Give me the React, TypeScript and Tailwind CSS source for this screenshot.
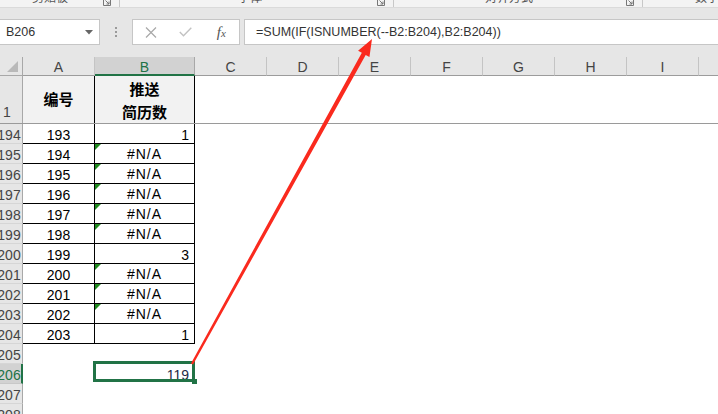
import React from "react";

const UI = "font-['Liberation_Sans','Noto_Sans_CJK_SC',sans-serif]";
const CJK = "font-['Noto_Sans_CJK_SC','Liberation_Sans',sans-serif]";

const cols = [
  { k: "A", w: "w-[72px]" },
  { k: "B", w: "w-[100px]" },
  { k: "C", w: "w-[72px]" },
  { k: "D", w: "w-[72px]" },
  { k: "E", w: "w-[72px]" },
  { k: "F", w: "w-[72px]" },
  { k: "G", w: "w-[72px]" },
  { k: "H", w: "w-[72px]" },
  { k: "I", w: "w-[72px]" },
  { k: "J", w: "w-[72px]" },
];

type Row = { n: number; a?: string; b?: string };

const rows: Row[] = [
  { n: 194, a: "193", b: "1" },
  { n: 195, a: "194", b: "#N/A" },
  { n: 196, a: "195", b: "#N/A" },
  { n: 197, a: "196", b: "#N/A" },
  { n: 198, a: "197", b: "#N/A" },
  { n: 199, a: "198", b: "#N/A" },
  { n: 200, a: "199", b: "3" },
  { n: 201, a: "200", b: "#N/A" },
  { n: 202, a: "201", b: "#N/A" },
  { n: 203, a: "202", b: "#N/A" },
  { n: 204, a: "203", b: "1" },
  { n: 205 },
  { n: 206 },
  { n: 207 },
  { n: 208 },
];

function Launcher() {
  return (
    <svg width="8" height="8" viewBox="0 0 8 8" className="block">
      <path d="M0.5 0.5 H7.5 V7.5 H0.5 Z" fill="none" stroke="#777" strokeWidth="1" />
      <path d="M2.5 2.5 L6 6 M6 3.5 V6 H3.5" fill="none" stroke="#777" strokeWidth="1" />
    </svg>
  );
}

function RibbonGroup({ label, w, ml, last }: { label: string; w: string; ml: string; last?: boolean }) {
  return (
    <div className={`${w} h-full shrink-0 flex items-start ${last ? "" : "border-r border-[#c8c8c8]"}`}>
      <span className={`${ml} -mt-[8px] text-[12px] leading-[12px] text-[#555] whitespace-nowrap`}>{label}</span>
      {!last && (
        <div className="ml-auto mr-[8px] -mt-[2px]">
          <Launcher />
        </div>
      )}
    </div>
  );
}

function RowNum({ n, sel }: { n: number; sel?: boolean }) {
  return (
    <div
      className={`w-[23px] shrink-0 h-full overflow-hidden flex items-center border-b ${
        sel
          ? "bg-[#d2d2d2] text-[#217346] border-r-2 border-r-[#217346] border-b-[#c8c8c8]"
          : "bg-[#e6e6e6] text-[#444] border-r border-r-[#a8a8a8] border-b-[#d6d6d6]"
      }`}
    >
      <div className="w-[34px] -ml-[8px] shrink-0 text-center text-[14px] leading-none pt-[2px]">{n}</div>
    </div>
  );
}

export default function App() {
  return (
    <div className={`relative w-[718px] h-[414px] overflow-hidden bg-white ${UI}`}>
      {/* ribbon edge */}
      <div className="h-[8px] bg-[#f3f3f3] border-b border-[#dadada] flex overflow-hidden">
        <RibbonGroup label="剪贴板" w="w-[120px]" ml="ml-[32px]" />
        <RibbonGroup label="字体" w="w-[274px]" ml="ml-[118px]" />
        <RibbonGroup label="对齐方式" w="w-[249px]" ml="ml-[91px]" />
        <RibbonGroup label="数字" w="w-[80px]" ml="ml-[52px]" last />
      </div>

      {/* formula bar */}
      <div className="h-[49px] bg-[#e6e6e6] pt-[11px] flex items-start">
        <div className="w-[100px] h-[26px] shrink-0 bg-white border border-l-0 border-[#c6c6c6] flex items-center pl-[6px] text-[12.5px] text-[#333]">
          B206
          <svg width="8" height="5" viewBox="0 0 8 5" className="ml-auto mr-[6px]">
            <path d="M0 0 H8 L4 4.5 Z" fill="#666" />
          </svg>
        </div>
        <div className="w-[32px] h-[26px] shrink-0 flex flex-col items-center justify-center gap-[2px]">
          <span className="w-[2px] h-[2px] bg-[#9a9a9a]" />
          <span className="w-[2px] h-[2px] bg-[#9a9a9a]" />
          <span className="w-[2px] h-[2px] bg-[#9a9a9a]" />
        </div>
        <div className="w-[108px] h-[26px] shrink-0 bg-white border border-[#c6c6c6] flex items-center">
          <div className="w-[36px] flex justify-center">
            <svg width="12" height="11" viewBox="0 0 12 11">
              <path d="M1 0.5 L11 10.5 M11 0.5 L1 10.5" stroke="#a8a8a8" strokeWidth="1.2" />
            </svg>
          </div>
          <div className="w-[36px] flex justify-center">
            <svg width="13" height="10" viewBox="0 0 13 10">
              <path d="M0.8 5 L4.5 8.8 L12.3 0.8" fill="none" stroke="#c2c2c2" strokeWidth="1.4" />
            </svg>
          </div>
          <div className="w-[36px] flex justify-center">
            <span className="font-['Liberation_Serif',serif] italic text-[15px] leading-none text-[#555]">
              f<span className="text-[11px]">x</span>
            </span>
          </div>
        </div>
        <div className="ml-[4px] flex-1 h-[26px] bg-white border border-r-0 border-[#c6c6c6] flex items-center pl-[11px] text-[12.5px] text-[#333] whitespace-nowrap">
          =SUM(IF(ISNUMBER(--B2:B204),B2:B204))
        </div>
      </div>

      {/* column headers */}
      <div className="flex h-[19px] bg-[#e6e6e6]">
        <div className="w-[23px] shrink-0 border-r border-b border-[#a8a8a8] flex items-end justify-end pr-[4px] pb-[3px]">
          <svg width="11" height="11" viewBox="0 0 11 11">
            <path d="M11 0 V11 H0 Z" fill="#b9b9b9" />
          </svg>
        </div>
        {cols.map((c) => (
          <div
            key={c.k}
            className={`${c.w} shrink-0 flex items-center justify-center text-[14px] leading-none pt-[2px] ${
              c.k === "B"
                ? "bg-[#d2d2d2] text-[#217346] border-r border-r-[#a8a8a8] border-b-2 border-b-[#217346]"
                : "text-[#444] border-r border-r-[#c4c4c4] border-b border-b-[#9c9c9c]"
            }`}
          >
            {c.k}
          </div>
        ))}
      </div>

      {/* row 1 (frozen) */}
      <div className="flex h-[48px] border-b border-[#9a9a9a]">
        <div className="w-[23px] shrink-0 h-full overflow-hidden flex items-end bg-[#e6e6e6] text-[#444] border-r border-[#a8a8a8]">
          <div className="w-[30px] -ml-[8px] shrink-0 text-center text-[14px] leading-none pb-[4px]">1</div>
        </div>
        <div className={`w-[72px] shrink-0 h-full bg-[#f2f2f2] border-r border-black flex items-center justify-center ${CJK} font-bold text-[15px] text-black`}>
          编号
        </div>
        <div className={`w-[100px] shrink-0 h-full bg-[#f2f2f2] border-r border-black flex flex-col items-center justify-center ${CJK} font-bold text-[15px] leading-[23px] text-black`}>
          <span>推送</span>
          <span>简历数</span>
        </div>
        <div className="flex-1" />
      </div>

      {/* body rows */}
      {rows.map((r) => {
        const sel = r.n === 206;
        const boxed = r.a !== undefined;
        const err = r.b === "#N/A";
        return (
          <div key={r.n} className="flex h-[20px]">
            <RowNum n={r.n} sel={sel} />
            <div
              className={`w-[72px] shrink-0 h-full flex items-center justify-center text-[14px] leading-none pt-[2px] text-black ${
                boxed ? "border-r border-b border-black" : ""
              }`}
            >
              {r.a}
            </div>
            <div
              className={`relative w-[100px] shrink-0 h-full flex items-center text-[14px] leading-none text-black ${
                boxed ? "border-r border-b border-black" : ""
              } ${err ? "justify-center tracking-[1px]" : "justify-end pr-[5px] pt-[2px]"}`}
            >
              {err && (
                <span className="absolute left-0 top-0 w-0 h-0 border-t-[6px] border-t-[#1f8a1f] border-r-[6px] border-r-transparent" />
              )}
              {r.b}
              {sel && (
                <>
                  <span className="text-[#1e2a44] pr-[1px]">119</span>
                  <div className="absolute -left-[2px] -top-[3px] right-0 bottom-[2px] border-[3px] border-[#217346]">
                    <div className="absolute -right-[5px] -bottom-[5px] w-[5px] h-[5px] bg-[#217346]" />
                  </div>
                </>
              )}
            </div>
          </div>
        );
      })}

      {/* red arrow annotation */}
      <svg className="absolute inset-0 pointer-events-none" width="718" height="414" viewBox="0 0 718 414">
        <polygon
          points="193.05,364.58 365.68,54.94 369.45,57.02 372,39 358.07,50.72 361.84,52.8 190.95,363.42"
          fill="#fa2a1e"
        />
      </svg>
    </div>
  );
}
